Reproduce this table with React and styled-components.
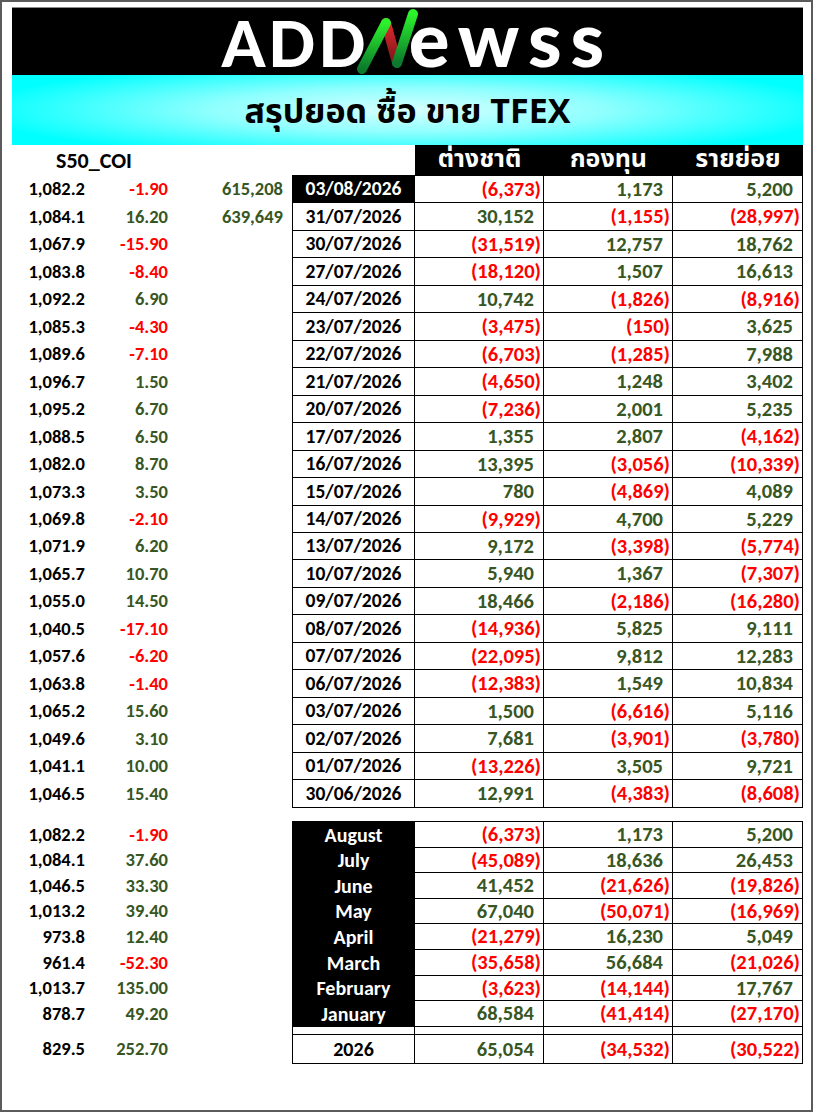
import React from "react";
import styled, { createGlobalStyle } from "styled-components";

const GREEN = "#375623";
const RED = "#ff0000";
const COLS = "73px 83px 115px 10px 122px 129px 129px 130px";
const FONT = `Carlito, Lato, "Noto Sans Thai", "Noto Sans", sans-serif`;
const THAI = `"Noto Sans Thai", Tahoma, "Noto Sans", sans-serif`;

const GlobalStyle = createGlobalStyle`
  html, body { margin: 0; padding: 0; background: #fff; }
  body { font-family: ${FONT}; }
`;

const daily = [
  ["1,082.2", "-1.90", "615,208", "03/08/2026", "(6,373)", "1,173", "5,200"],
  ["1,084.1", "16.20", "639,649", "31/07/2026", "30,152", "(1,155)", "(28,997)"],
  ["1,067.9", "-15.90", "", "30/07/2026", "(31,519)", "12,757", "18,762"],
  ["1,083.8", "-8.40", "", "27/07/2026", "(18,120)", "1,507", "16,613"],
  ["1,092.2", "6.90", "", "24/07/2026", "10,742", "(1,826)", "(8,916)"],
  ["1,085.3", "-4.30", "", "23/07/2026", "(3,475)", "(150)", "3,625"],
  ["1,089.6", "-7.10", "", "22/07/2026", "(6,703)", "(1,285)", "7,988"],
  ["1,096.7", "1.50", "", "21/07/2026", "(4,650)", "1,248", "3,402"],
  ["1,095.2", "6.70", "", "20/07/2026", "(7,236)", "2,001", "5,235"],
  ["1,088.5", "6.50", "", "17/07/2026", "1,355", "2,807", "(4,162)"],
  ["1,082.0", "8.70", "", "16/07/2026", "13,395", "(3,056)", "(10,339)"],
  ["1,073.3", "3.50", "", "15/07/2026", "780", "(4,869)", "4,089"],
  ["1,069.8", "-2.10", "", "14/07/2026", "(9,929)", "4,700", "5,229"],
  ["1,071.9", "6.20", "", "13/07/2026", "9,172", "(3,398)", "(5,774)"],
  ["1,065.7", "10.70", "", "10/07/2026", "5,940", "1,367", "(7,307)"],
  ["1,055.0", "14.50", "", "09/07/2026", "18,466", "(2,186)", "(16,280)"],
  ["1,040.5", "-17.10", "", "08/07/2026", "(14,936)", "5,825", "9,111"],
  ["1,057.6", "-6.20", "", "07/07/2026", "(22,095)", "9,812", "12,283"],
  ["1,063.8", "-1.40", "", "06/07/2026", "(12,383)", "1,549", "10,834"],
  ["1,065.2", "15.60", "", "03/07/2026", "1,500", "(6,616)", "5,116"],
  ["1,049.6", "3.10", "", "02/07/2026", "7,681", "(3,901)", "(3,780)"],
  ["1,041.1", "10.00", "", "01/07/2026", "(13,226)", "3,505", "9,721"],
  ["1,046.5", "15.40", "", "30/06/2026", "12,991", "(4,383)", "(8,608)"],
];

const monthly = [
  ["1,082.2", "-1.90", "August", "(6,373)", "1,173", "5,200"],
  ["1,084.1", "37.60", "July", "(45,089)", "18,636", "26,453"],
  ["1,046.5", "33.30", "June", "41,452", "(21,626)", "(19,826)"],
  ["1,013.2", "39.40", "May", "67,040", "(50,071)", "(16,969)"],
  ["973.8", "12.40", "April", "(21,279)", "16,230", "5,049"],
  ["961.4", "-52.30", "March", "(35,658)", "56,684", "(21,026)"],
  ["1,013.7", "135.00", "February", "(3,623)", "(14,144)", "17,767"],
  ["878.7", "49.20", "January", "68,584", "(41,414)", "(27,170)"],
];

const total = ["829.5", "252.70", "2026", "65,054", "(34,532)", "(30,522)"];

const isNeg = (v) => v.startsWith("-") || v.startsWith("(");
const statColor = (v) => (isNeg(v) ? RED : GREEN);
// whole-pixel row heights so the cell borders stay crisp
const rowHeight = (i, step) => Math.round((i + 1) * step) - Math.round(i * step);

const Frame = styled.div`
  box-sizing: border-box;
  width: 813px;
  height: 1112px;
  border: 2px solid #5b5b5b;
  padding: 5px 8px 0 10px;
  background: #fff;
`;

const LogoBar = styled.div`
  width: 791px;
  height: 68px;
  background: #000;
  border-top: 1px solid #8a8a8a;
  box-sizing: border-box;
  display: flex;
  align-items: center;
  justify-content: center;
  padding-left: 20px;
`;

const LogoText = styled.span`
  font-family: Lato, "DejaVu Sans", sans-serif;
  font-weight: 900;
  color: #fff;
  font-size: ${(p) => p.$size}px;
  line-height: 0.8;
  letter-spacing: ${(p) => p.$track}px;
  transform: translateY(${(p) => p.$dy}px);
`;

const TitleBand = styled.div`
  width: 791px;
  height: 70px;
  background: radial-gradient(ellipse 55% 70% at 50% 50%, #d8ffff 0%, #8ffffe 45%, #00ffff 100%);
  display: flex;
  align-items: center;
  justify-content: center;
  padding-top: 4px;
  box-sizing: border-box;
  font-family: ${THAI};
  font-weight: 700;
  font-size: 34px;
  color: #000;
`;

const Row = styled.div`
  display: grid;
  grid-template-columns: ${COLS};
  grid-template-rows: minmax(0, 1fr);
  height: ${(p) => p.$h}px;
  margin-top: ${(p) => p.$gap || 0}px;
`;

const Label = styled.div`
  grid-column: 1 / span 2;
  display: flex;
  align-items: center;
  justify-content: center;
  padding-left: 8px;
  font-size: 22px;
  font-weight: 700;
  color: #000;
`;

const HeadCell = styled.div`
  grid-column: ${(p) => p.$col};
  background: #000;
  color: #fff;
  display: flex;
  align-items: center;
  justify-content: center;
  font-family: ${THAI};
  font-weight: 700;
  font-size: 25px;
  line-height: 1;
  padding-bottom: 3px;
  box-sizing: border-box;
`;

const Stat = styled.div`
  grid-column: ${(p) => p.$col};
  display: flex;
  align-items: center;
  justify-content: flex-end;
  font-size: 18.5px;
  line-height: 1;
  font-weight: 700;
  color: ${(p) => p.$color};
`;

const Boxed = styled.div`
  box-sizing: border-box;
  border: 1px solid #000;
  margin: -1px 0 0 -1px;
  display: flex;
  align-items: center;
  line-height: 1;
  font-weight: 700;
`;

const DateCell = styled(Boxed)`
  grid-column: 5;
  justify-content: center;
  font-size: 19.5px;
  background: ${(p) => (p.$dark ? "#000" : "#fff")};
  color: ${(p) => (p.$dark ? "#fff" : "#000")};
`;

const MonthCell = styled(Boxed)`
  grid-column: 5;
  justify-content: center;
  font-size: 20px;
  background: #000;
  color: #fff;
`;

const NumCell = styled(Boxed)`
  justify-content: flex-end;
  font-size: 20.5px;
  padding-right: ${(p) => (p.$neg ? 2 : 9)}px;
  color: ${(p) => (p.$neg ? RED : GREEN)};
`;

const Spacer = styled(Boxed)`
  grid-column: ${(p) => p.$col};
`;

const TotalCell = styled(Boxed)`
  grid-column: 5;
  justify-content: center;
  font-size: 20px;
  color: #000;
`;

const LogoN = () => (
  <svg width="66" height="68" viewBox="0 0 66 68" style={{ margin: "0 -10px 0 -16px" }}>
    <defs>
      <linearGradient id="nRed" x1="0" y1="0" x2="0" y2="1">
        <stop offset="0" stopColor="#e02a2e" />
        <stop offset="1" stopColor="#7a1418" />
      </linearGradient>
      <linearGradient id="nGreen" x1="0" y1="0" x2="0" y2="1">
        <stop offset="0" stopColor="#2cf22c" />
        <stop offset="1" stopColor="#0b7a2c" />
      </linearGradient>
    </defs>
    <line x1="33" y1="15" x2="44" y2="55" stroke="url(#nRed)" strokeWidth="10" strokeLinecap="round" />
    <line x1="9" y1="61" x2="33" y2="15" stroke="url(#nGreen)" strokeWidth="10" strokeLinecap="round" />
    <line x1="44" y1="55" x2="60" y2="6" stroke="url(#nGreen)" strokeWidth="10" strokeLinecap="round" />
  </svg>
);

export default function App() {
  return (
    <>
      <GlobalStyle />
      <Frame>
        <LogoBar>
          <LogoText $size={62} $track={3} $dy={2}>ADD</LogoText>
          <LogoN />
          <LogoText $size={76} $track={9} $dy={-3}>ewss</LogoText>
        </LogoBar>
        <TitleBand>สรุปยอด ซื้อ ขาย TFEX</TitleBand>

        <Row $h={31}>
          <Label>S50_COI</Label>
          <HeadCell $col={6}>ต่างชาติ</HeadCell>
          <HeadCell $col={7}>กองทุน</HeadCell>
          <HeadCell $col={8}>รายย่อย</HeadCell>
        </Row>

        {daily.map((r, i) => (
          <Row key={r[3]} $h={rowHeight(i, 27.46)}>
            <Stat $col={1} $color="#000">{r[0]}</Stat>
            <Stat $col={2} $color={statColor(r[1])}>{r[1]}</Stat>
            {r[2] && <Stat $col={3} $color={GREEN}>{r[2]}</Stat>}
            <DateCell $dark={i === 0}>{r[3]}</DateCell>
            {r.slice(4).map((v, j) => (
              <NumCell key={j} $neg={isNeg(v)}>{v}</NumCell>
            ))}
          </Row>
        ))}

        {monthly.map((r, i) => (
          <Row key={r[2]} $h={rowHeight(i, 25.6)} $gap={i === 0 ? 14 : 0}>
            <Stat $col={1} $color="#000">{r[0]}</Stat>
            <Stat $col={2} $color={statColor(r[1])}>{r[1]}</Stat>
            <MonthCell>{r[2]}</MonthCell>
            {r.slice(3).map((v, j) => (
              <NumCell key={j} $neg={isNeg(v)}>{v}</NumCell>
            ))}
          </Row>
        ))}

        <Row $h={8}>
          {[5, 6, 7, 8].map((c) => (
            <Spacer key={c} $col={c} />
          ))}
        </Row>

        <Row $h={29}>
          <Stat $col={1} $color="#000">{total[0]}</Stat>
          <Stat $col={2} $color={statColor(total[1])}>{total[1]}</Stat>
          <TotalCell>{total[2]}</TotalCell>
          {total.slice(3).map((v, j) => (
            <NumCell key={j} $neg={isNeg(v)}>{v}</NumCell>
          ))}
        </Row>
      </Frame>
    </>
  );
}
